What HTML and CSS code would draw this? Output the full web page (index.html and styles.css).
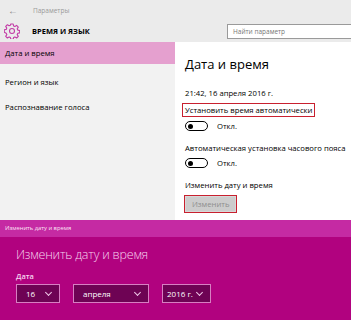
FILE: index.html
```html
<!DOCTYPE html>
<html lang="ru">
<head>
  <meta charset="UTF-8">
  <title>Параметры</title>
  <link rel="stylesheet" href="styles.css">
</head>
<body>
  <div class="settings">
    <div class="titlebar">
      <span class="back">&#8592;</span>
      <span class="apptitle">Параметры</span>
    </div>
    <div class="header">
      <div class="section">
        <svg class="gear" width="16" height="16" viewBox="0 0 16 16">
          <path d="M6.8 1h2.4l.4 1.9 1.3.6 1.7-1.1 1.7 1.7-1.1 1.7.6 1.3 1.9.4v2.4l-1.9.4-.6 1.3 1.1 1.7-1.7 1.7-1.7-1.1-1.3.6-.4 1.9H6.8l-.4-1.9-1.3-.6-1.7 1.1-1.7-1.7 1.1-1.7-.6-1.3L.3 9.2V6.8l1.9-.4.6-1.3-1.1-1.7 1.7-1.7 1.7 1.1 1.3-.6z" fill="none" stroke="#c23ca6" stroke-width="1.1" stroke-linejoin="round"/>
          <circle cx="8" cy="8" r="2.5" fill="none" stroke="#c23ca6" stroke-width="1.1"/>
        </svg>
        <span class="section-name">ВРЕМЯ И ЯЗЫК</span>
      </div>
      <div class="search">Найти параметр</div>
    </div>
    <div class="main">
      <nav class="sidebar">
        <div class="nav-item active">Дата и время</div>
        <div class="nav-item">Регион и язык</div>
        <div class="nav-item">Распознавание голоса</div>
      </nav>
      <div class="content">
        <h1>Дата и время</h1>
        <p class="now">21:42, 16 апреля 2016 г.</p>
        <div class="label marked">Установить время автоматически</div>
        <div class="toggle-row"><span class="toggle"></span>Откл.</div>
        <div class="label">Автоматическая установка часового пояса</div>
        <div class="toggle-row"><span class="toggle"></span>Откл.</div>
        <div class="label">Изменить дату и время</div>
        <div class="btn-wrap"><span class="btn">Изменить</span></div>
      </div>
    </div>
  </div>

  <div class="dialog">
    <div class="dialog-title">Изменить дату и время</div>
    <div class="dialog-body">
      <h2>Изменить дату и время</h2>
      <div class="field-label">Дата</div>
      <div class="selects">
        <div class="select day">16<span class="chev"></span></div>
        <div class="select month">апреля<span class="chev"></span></div>
        <div class="select year">2016 г.<span class="chev"></span></div>
      </div>
    </div>
  </div>
</body>
</html>
```

FILE: styles.css
```css
body {
  margin: 0;
  font-family: "Open Sans", "Noto Sans", sans-serif;
  background-color: #b1027f;
  color: #000;
  overflow: hidden;
}
.settings {
  background-color: #f2f2f2;
  height: 220px;
  display: flex;
  flex-direction: column;
}
.titlebar {
  height: 20px;
  display: flex;
  align-items: center;
  background-color: #ebebeb;
  font-size: 6.5px;
  color: #9a9a9a;
}
.back {
  width: 20px;
  margin-left: 3px;
  font-size: 10px;
  color: #888;
  text-align: center;
}
.apptitle {
  margin-left: 10px;
}
.header {
  height: 22px;
  display: flex;
  align-items: center;
  background-color: #ebebeb;
}
.section {
  width: 175px;
  display: flex;
  align-items: center;
}
.gear {
  margin-left: 4px;
}
.section-name {
  margin-left: 12px;
  font-size: 7.5px;
  font-weight: bold;
}
.search {
  margin-left: 52px;
  flex: 1;
  height: 13px;
  border: 1px solid #9a9a9a;
  border-right: none;
  background-color: #fff;
  font-size: 6.5px;
  color: #777;
  line-height: 13px;
  padding-left: 5px;
}
.main {
  flex: 1;
  display: flex;
}
.sidebar {
  width: 175px;
}
.nav-item {
  height: 25px;
  line-height: 25px;
  padding-left: 5px;
  font-size: 7.7px;
}
.active {
  height: 22px;
  line-height: 22px;
  margin-bottom: 6px;
  background-color: #e5a0cf;
}
.content {
  flex: 1;
  background-color: #fff;
  padding-left: 10px;
  white-space: nowrap;
  font-size: 7.7px;
}
h1 {
  margin: 13px 0 0;
  height: 18px;
  line-height: 18px;
  font-size: 13px;
  font-weight: normal;
}
.now {
  margin: 14px 0 0;
  height: 12px;
  line-height: 12px;
}
.label {
  margin-top: 10px;
  height: 12px;
  line-height: 12px;
}
.marked {
  display: inline-block;
  margin-top: 4px;
  margin-left: -3px;
  padding: 0 2px;
  border: 1.5px solid #c8202f;
}
.toggle-row {
  display: flex;
  align-items: center;
  height: 12px;
  margin-top: 3px;
}
.toggle {
  width: 21px;
  height: 8px;
  border: 1.5px solid #000;
  border-radius: 6px;
  margin-right: 9px;
  position: relative;
}
.toggle::after {
  content: "";
  position: absolute;
  left: 2px;
  top: 1.5px;
  width: 5px;
  height: 5px;
  border-radius: 50%;
  background-color: #000;
}
.btn-wrap {
  margin-top: 4px;
}
.btn {
  display: inline-block;
  height: 16px;
  line-height: 16px;
  padding: 0 7px;
  margin-left: -1px;
  background-color: #cccccc;
  color: #8e8e8e;
  border: 1.5px solid #c8202f;
  box-shadow: inset 0 0 0 1px #d8d8d8;
}
.dialog {
  color: #fff;
}
.dialog-title {
  height: 17px;
  line-height: 17px;
  background-color: #c52aa3;
  font-size: 5.8px;
  padding-left: 5px;
  color: #fbe3f4;
}
.dialog-body {
  padding: 9px 16px 0;
}
h2 {
  margin: 0;
  font-size: 12.5px;
  font-weight: 300;
  letter-spacing: -0.2px;
  color: #f6d3ee;
}
.field-label {
  margin-top: 8px;
  font-size: 7.5px;
  font-weight: 600;
  color: #f6d3ee;
}
.selects {
  display: flex;
  margin-top: 3px;
}
.select {
  box-sizing: border-box;
  height: 19px;
  border: 1px solid #d77fc2;
  background-color: #6e0354;
  font-size: 8px;
  padding-left: 9px;
  display: flex;
  justify-content: space-between;
  align-items: center;
}
.chev {
  width: 4px;
  height: 4px;
  border-right: 1px solid #f0c8e8;
  border-bottom: 1px solid #f0c8e8;
  transform: rotate(45deg);
  margin: -3px 8px 0 0;
}
.day {
  width: 44px;
}
.month {
  width: 76px;
  margin-left: 13px;
}
.year {
  width: 49px;
  margin-left: 13px;
  padding-left: 4px;
}
```
